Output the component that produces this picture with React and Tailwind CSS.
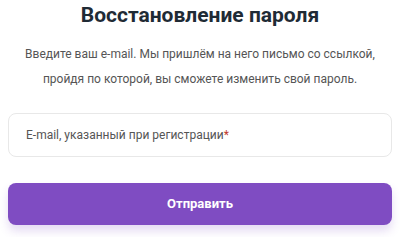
import React from 'react';

export default function App() {
  return (
    <div className="w-[400px] h-[237px] bg-white overflow-hidden font-['Roboto',sans-serif] px-2">
      <h1 className="text-center text-[21px] font-bold text-[#1f2b35] leading-[24px] pt-[3px]">
        Восстановление пароля
      </h1>
      <p className="mt-[15px] text-center text-[12px] leading-[25px] text-[#555]">
        Введите ваш e-mail. Мы пришлём на него письмо со ссылкой,
        <br />
        пройдя по которой, вы сможете изменить свой пароль.
      </p>
      <div className="mt-[21px] h-[44px] rounded-lg border border-[#e8e8e8] flex items-center px-[17px] text-[12px] text-[#555]">
        E-mail, указанный при регистрации<span className="text-[#c0392b]">*</span>
      </div>
      <button className="mt-[26px] w-full h-[42px] rounded-lg bg-[#7f4cc2] text-white font-bold text-[13px] shadow-[0_6px_10px_rgba(127,76,194,0.2)]">
        Отправить
      </button>
    </div>
  );
}
